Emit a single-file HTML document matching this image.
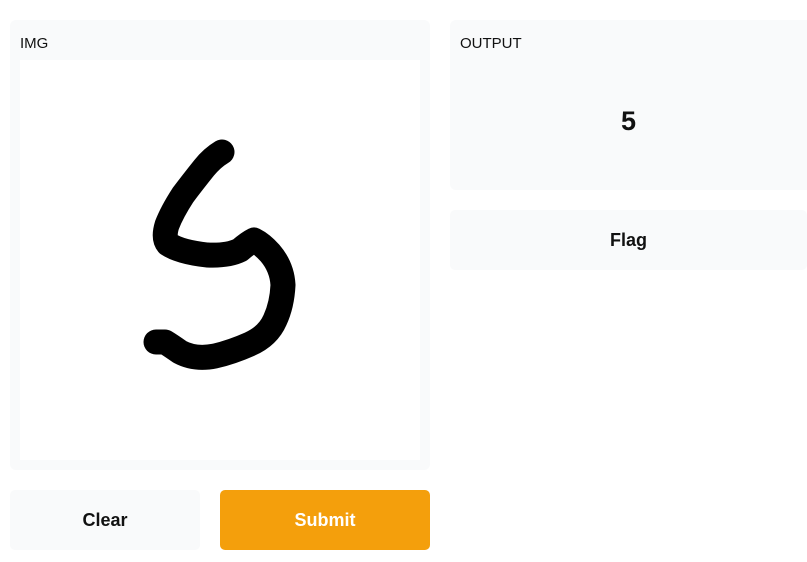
<!DOCTYPE html>
<html><head><style>
body{margin:0;width:807px;height:562px;background:#fff;font-family:"Liberation Sans",sans-serif;position:relative;overflow:hidden}
.p{position:absolute;background:#f9fafb;border-radius:6px}
.lbl{position:absolute;font-size:15px;color:#111}
.btn{position:absolute;border-radius:5px;display:flex;align-items:center;justify-content:center;font-size:18px;font-weight:bold}
</style></head><body>
<div class="p" style="left:10px;top:20px;width:420px;height:450px"></div>
<div class="lbl" style="left:20px;top:35px">IMG</div>
<div style="position:absolute;left:20px;top:60px;width:400px;height:400px;background:#fff"></div>
<svg style="position:absolute;left:0;top:0" width="807" height="562">
<path d="M222 152 Q212 158 204 168 Q192 183 183 195 Q172 212 167 225 Q163 238 168 244 Q180 252 207 255 Q228 256 240 250 Q248 243 254 240 Q262 244 270 253 Q282 267 283 285 Q282 305 275 320 Q268 336 250 344 Q232 352 215 356 Q195 360 180 352 Q170 345 165 342 L156 342" fill="none" stroke="#000" stroke-width="25" stroke-linecap="round" stroke-linejoin="round"/>
</svg>
<div class="p" style="left:450px;top:20px;width:370px;height:170px"></div>
<div class="lbl" style="left:460px;top:35px">OUTPUT</div>
<div style="position:absolute;left:450px;top:106px;width:357px;text-align:center;font-size:27px;font-weight:bold;color:#111">5</div>
<div class="btn" style="left:450px;top:210px;width:357px;height:60px;background:#f9fafb;color:#111">Flag</div>
<div class="btn" style="left:10px;top:490px;width:190px;height:60px;background:#f9fafb;color:#111">Clear</div>
<div class="btn" style="left:220px;top:490px;width:210px;height:60px;background:#f49f0c;color:#fff">Submit</div>
</body></html>
